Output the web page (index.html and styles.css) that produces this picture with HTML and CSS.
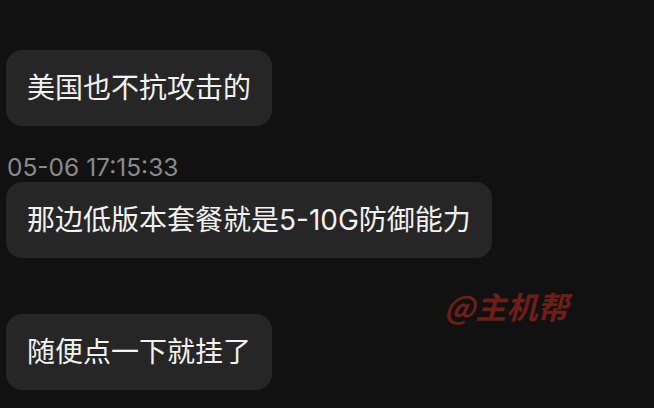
FILE: index.html
```html
<!DOCTYPE html>
<html lang="zh">
<head>
<meta charset="utf-8">
<link rel="stylesheet" href="styles.css">
</head>
<body>
<div class="chat">
  <div class="bubble first">美国也不抗攻击的</div>
  <div class="time">05-06 17:15:33</div>
  <div class="bubble">那边低版本套餐就是5-10G防御能力</div>
  <div class="bubble third">随便点一下就挂了</div>
</div>
<div class="watermark">@主机帮</div>
</body>
</html>
```
FILE: styles.css
```css
html, body {
  margin: 0;
  padding: 0;
  background: #111111;
  width: 654px;
  height: 408px;
  overflow: hidden;
}
body {
  position: relative;
  font-family: "Inter", "Noto Sans CJK SC", "Noto Sans", sans-serif;
}
.chat {
  display: flex;
  flex-direction: column;
  align-items: flex-start;
  padding: 50px 0 0 6px;
}
.bubble {
  background: #262626;
  color: #f2f2f2;
  font-size: 28px;
  line-height: 38px;
  padding: 19px 21px;
  border-radius: 16px;
  white-space: nowrap;
}
.time {
  color: #8a8a8a;
  font-family: "Inter", "Liberation Sans", sans-serif;
  font-size: 24.5px;
  line-height: 30px;
  margin: 26px 0 0 1px;
}
.third {
  margin-top: 56px;
}
.watermark {
  position: absolute;
  left: 444px;
  top: 286px;
  font-size: 31px;
  font-weight: bold;
  font-style: italic;
  color: rgba(150, 36, 26, 0.7);
  font-family: "Noto Sans CJK SC", sans-serif;
  line-height: 40px;
}
```
